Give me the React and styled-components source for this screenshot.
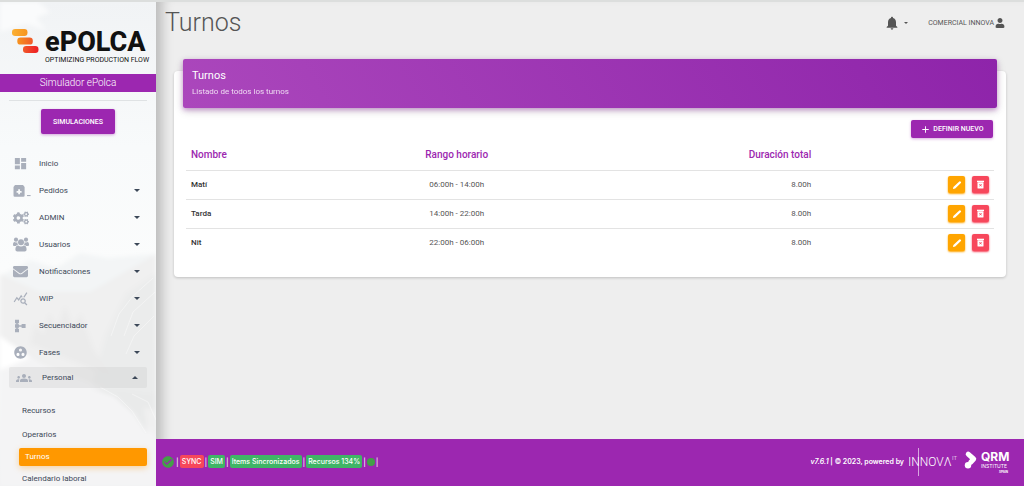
import { useState } from "react";
import styled, { createGlobalStyle } from "styled-components";
import {
  MdAdd,
  MdCheckCircle,
  MdDashboard,
  MdGroups,
  MdGroupWork,
  MdNotifications,
  MdQueryStats,
} from "react-icons/md";
import { FaCogs, FaEnvelope, FaUser } from "react-icons/fa";

const menu = [
  { name: "Inicio", icon: <MdDashboard size={15} />, plain: true },
  { name: "Pedidos", icon: <OrdersIcon /> },
  { name: "ADMIN", icon: <FaCogs size={16} /> },
  { name: "Usuarios", icon: <UsersIcon /> },
  { name: "Notificaciones", icon: <FaEnvelope size={15} /> },
  { name: "WIP", icon: <MdQueryStats size={15} /> },
  { name: "Secuenciador", icon: <SequenceIcon /> },
  { name: "Fases", icon: <MdGroupWork size={15} /> },
];

const submenu = ["Recursos", "Operarios", "Turnos", "Calendario laboral"];

const shifts = [
  { name: "Matí", range: "06:00h - 14:00h", total: "8.00h" },
  { name: "Tarda", range: "14:00h - 22:00h", total: "8.00h" },
  { name: "Nit", range: "22:00h - 06:00h", total: "8.00h" },
];

export default function App() {
  return (
    <>
      <GlobalStyle />
      <Page>
        <Sidebar />
        <Main>
          <TopBar>
            <PageTitle>Turnos</PageTitle>
            <UserArea>
              <BellButton aria-label="Notificaciones">
                <MdNotifications size={16} />
                <SmallCaret />
              </BellButton>
              <UserLink href="#perfil">
                COMERCIAL INNOVA
                <FaUser size={10} />
              </UserLink>
            </UserArea>
          </TopBar>
          <Content>
            <Card>
              <CardHeader>
                <CardTitle>Turnos</CardTitle>
                <CardText>Listado de todos los turnos</CardText>
              </CardHeader>
              <Actions>
                <NewButton>
                  <MdAdd size={11} />
                  DEFINIR NUEVO
                </NewButton>
              </Actions>
              <ShiftTable />
            </Card>
          </Content>
          <PageFooter />
        </Main>
      </Page>
    </>
  );
}

function Sidebar() {
  const [open, setOpen] = useState(true);

  return (
    <Aside>
      <Mountains />
      <Brand href="#inicio">
        <BrandMark />
        <BrandText>
          <BrandName>ePOLCA</BrandName>
          <BrandLine>OPTIMIZING PRODUCTION FLOW</BrandLine>
        </BrandText>
      </Brand>
      <Company>Simulador ePolca</Company>
      <Divider />
      <SimButton>SIMULACIONES</SimButton>
      <nav>
        {menu.map((item) => (
          <MenuLink key={item.name} href="#menu">
            <IconBox>{item.icon}</IconBox>
            <span>{item.name}</span>
            {!item.plain && <Caret />}
          </MenuLink>
        ))}
        <OpenGroup onClick={() => setOpen(!open)} aria-expanded={open}>
          <MdGroups size={16} />
          <span>Personal</span>
          <Caret $up={open} />
        </OpenGroup>
        {open && (
          <SubMenu>
            {submenu.map((name) => (
              <SubLink key={name} href="#personal" $active={name === "Turnos"}>
                {name}
              </SubLink>
            ))}
          </SubMenu>
        )}
      </nav>
    </Aside>
  );
}

function ShiftTable() {
  return (
    <Table>
      <thead>
        <tr>
          <Th $width="20%">Nombre</Th>
          <Th $width="27%" $align="center">Rango horario</Th>
          <Th $width="31%" $align="right">Duración total</Th>
          <Th aria-label="Acciones" />
        </tr>
      </thead>
      <tbody>
        {shifts.map((shift) => (
          <tr key={shift.name}>
            <Td $strong>{shift.name}</Td>
            <Td $align="center">{shift.range}</Td>
            <Td $align="right">{shift.total}</Td>
            <Td>
              <RowActions>
                <IconButton $color="#ffa500" aria-label={`Editar ${shift.name}`}>
                  <PencilIcon />
                </IconButton>
                <IconButton $color="#f7475b" aria-label={`Borrar ${shift.name}`}>
                  <TrashIcon />
                </IconButton>
              </RowActions>
            </Td>
          </tr>
        ))}
      </tbody>
    </Table>
  );
}

function PageFooter() {
  return (
    <Footer>
      <Status>
        <MdCheckCircle size={14} color="#43a047" />
        <span>|</span>
        <Badge $color="#f7475b">SYNC</Badge>
        <span>|</span>
        <Badge>SIM</Badge>
        <span>|</span>
        <Badge>Items Sincronizados</Badge>
        <span>|</span>
        <Badge>Recursos 134%</Badge>
        <span>|</span>
        <Dot />
        <span>|</span>
      </Status>
      <Credits>
        <span>
          <i>v7.6.1</i> | © 2023, powered by
        </span>
        <InnovaLogo />
        <QrmLogo />
      </Credits>
    </Footer>
  );
}

function BrandMark() {
  return (
    <svg width="27" height="26" viewBox="0 0 27 26">
      <defs>
        <linearGradient id="m1">
          <stop offset="0" stopColor="#fbb034" />
          <stop offset="1" stopColor="#f7941e" />
        </linearGradient>
        <linearGradient id="m2">
          <stop offset="0" stopColor="#f7941e" />
          <stop offset="1" stopColor="#f1592a" />
        </linearGradient>
        <linearGradient id="m3">
          <stop offset="0" stopColor="#f1592a" />
          <stop offset="1" stopColor="#ee1c25" />
        </linearGradient>
      </defs>
      <rect x="0" y="1" width="15.5" height="7" rx="3.2" fill="url(#m1)" />
      <rect x="5.3" y="9.6" width="15.5" height="7" rx="3.2" fill="url(#m2)" />
      <rect x="11" y="18" width="15.5" height="7" rx="3.2" fill="url(#m3)" />
    </svg>
  );
}

function OrdersIcon() {
  return (
    <svg width="18" height="14" viewBox="0 0 18 14" fill="currentColor">
      <path
        fillRule="evenodd"
        d="M2 1h8l1.6 2v8.4a1.3 1.3 0 0 1-1.3 1.3H1.8a1.3 1.3 0 0 1-1.3-1.3V3zM5.2 5.3v1.6H3.6v1.8h1.6v1.6h1.8V8.7h1.6V6.9H7V5.3z"
      />
      <path d="M14 11h3.6v1.1H14z" />
    </svg>
  );
}

function UsersIcon() {
  return (
    <svg width="16" height="15" viewBox="0 0 16 15" fill="currentColor">
      <circle cx="3" cy="2.7" r="2.1" />
      <circle cx="13" cy="2.7" r="2.1" />
      <path d="M0 7.6C0 6 .6 5.1 1.5 5.1c.8.6 2 .6 3 .1-.2 1.1.1 2 .6 2.8-1 .1-1.8.5-2.4 1.1H1.3C.5 9.1 0 8.6 0 7.6zM16 7.6c0-1.6-.6-2.5-1.5-2.5-.8.6-2 .6-3 .1.2 1.1-.1 2-.6 2.8 1 .1 1.8.5 2.4 1.1h1.4c.8 0 1.300-.5 1.300-1.500z" />
      <circle cx="8" cy="5.3" r="3" />
      <path d="M2.4 12.4c0-2.5 1-4 2.8-4 1.700 1.300 3.900 1.300 5.600 0 1.800 0 2.800 1.500 2.800 4 0 1.300-.8 2-2 2H4.400c-1.200 0-2-.7-2-2z" />
    </svg>
  );
}

function SequenceIcon() {
  return (
    <svg width="14" height="14" viewBox="0 0 14 14" fill="currentColor">
      <path d="M2 .8h4v3.4H2zM2 5.3h4v3.4H2zM2 9.8h4v3.4H2zM3.2 4h1.600v6H3.200zM6 6.300h3v1.400H6zM8.600 5.100h4v3.800h-4z" />
    </svg>
  );
}

function PencilIcon() {
  return (
    <svg width="10" height="10" viewBox="0 0 10 10" fill="#fff">
      <path d="M.9 9.100l.5-2.200 5.900-5.500a.9.9 0 0 1 1.200 0l.4.500a.9.9 0 0 1 0 1.200L3.200 8.600z" />
    </svg>
  );
}

function TrashIcon() {
  return (
    <svg width="9" height="9" viewBox="0 0 9 9" fill="#fff">
      <path d="M1 .7h7v1.300H1z" />
      <path
        fillRule="evenodd"
        d="M1.500 2.300h6v5.600a.7.7 0 0 1-.7.700H2.200a.7.7 0 0 1-.7-.7zM3.500 4l-.4.400.9.900-.9.900.4.400 1-.8 1 .8.400-.4-.9-.9.900-.9-.4-.4-1 .8z"
      />
    </svg>
  );
}

function InnovaLogo() {
  return (
    <svg width="50" height="30" viewBox="0 0 50 30" fill="#fff" fontFamily="Roboto, sans-serif">
      <path d="M9.500 1v28" stroke="#fff" strokeWidth=".6" />
      <text x="-1" y="19" fontSize="12" fontWeight="300">INNOVΛ</text>
      <text x="43" y="13" fontSize="6" fontWeight="300">IT</text>
    </svg>
  );
}

function QrmLogo() {
  return (
    <svg width="50" height="26" viewBox="0 0 50 26" fill="#fff" fontFamily="Inter, sans-serif">
      <path d="M4.200 5.200l5.500 4.800-3 3.200" fill="none" stroke="#fff" strokeWidth="5" strokeLinecap="round" strokeLinejoin="round" />
      <circle cx="4" cy="16.300" r="3.200" />
      <text x="17" y="12" fontSize="12" fontWeight="700">QRM</text>
      <text x="17" y="19" fontSize="5" fontWeight="400">INSTITUTE</text>
      <text x="35" y="24" fontSize="3" fontWeight="700">SPAIN</text>
    </svg>
  );
}

function Mountains() {
  return (
    <Backdrop viewBox="0 0 156 484" preserveAspectRatio="none" aria-hidden="true">
      <defs>
        <linearGradient id="sky" x2="0" y2="1">
          <stop offset="0" stopColor="#f1f3f5" />
          <stop offset=".3" stopColor="#f8fafb" />
          <stop offset=".55" stopColor="#fbfcfc" />
          <stop offset="1" stopColor="#f1f2f3" />
        </linearGradient>
        <filter id="soft">
          <feGaussianBlur stdDeviation="2" />
        </filter>
      </defs>
      <path d="M0 0h156v484H0z" fill="url(#sky)" />
      <g filter="url(#soft)">
        <path d="M0 0h38l12 10-14 6 10 12-20-6-26 8z" fill="#fafbfc" />
        <path d="M0 274l30-16 26 8 24-15 28 5 48-4v80H0z" fill="#f3f5f6" />
        <path d="M0 272l40 18 50 0 66-38v190L60 380 0 345z" fill="#f0f0f0" />
        <path d="M156 272l-30 20-20 40-14 50 34 18 30 6z" fill="#ebecec" />
        <path d="M30 342l5-20 8 10 6-20 8 14 8-22 8 20 8-12 12 34 20 30z" fill="#ebebeb" />
        <path d="M0 334l42 28 56 22 34 12 24 40v48H0z" fill="#f4f4f5" />
        <path d="M0 334l30 22-30 12z" fill="#fff" />
        <path d="M90 386l24 8 20 18 14 20-4-26 12 2v-16l-30-4z" fill="#e9eaea" />
      </g>
      <g fill="none" stroke="#fff" strokeWidth="1" opacity=".4">
        <path d="M153 276l-20 18-14 18-8 22M155 290l-22 20-9 24M154 314l-20 20-8 18" />
        <path d="M100 385l18 10 14 14 14 22M132 392l16 8 8 18" />
      </g>
    </Backdrop>
  );
}

const GlobalStyle = createGlobalStyle`
  * {
    box-sizing: border-box;
  }
  body {
    margin: 0;
    background: #eee;
    color: #3c4858;
    font-family: Roboto, "Liberation Sans", sans-serif;
    font-size: 8px;
  }
  button {
    font-family: inherit;
    border: 0;
    padding: 0;
    cursor: pointer;
  }
  a {
    color: inherit;
    text-decoration: none;
  }
`;

const Page = styled.div`
  display: flex;
  height: 100vh;
  border-top: 2px solid #dcdedd;
`;

const Aside = styled.aside`
  position: relative;
  z-index: 1;
  flex: 0 0 156px;
  overflow: hidden;
`;

const Backdrop = styled.svg`
  position: absolute;
  inset: 0;
  z-index: -1;
  width: 100%;
  height: 100%;
`;

const Brand = styled.a`
  display: flex;
  gap: 6px;
  padding: 26px 0 0 12px;
  height: 72px;
`;

const BrandText = styled.div`
  color: #111;
`;

const BrandName = styled.div`
  font-size: 27px;
  font-weight: 800;
  line-height: 28px;
`;

const BrandLine = styled.div`
  font-size: 7px;
  line-height: 8px;
  white-space: nowrap;
`;

const Company = styled.div`
  background: #9c27b0;
  color: #fff;
  font-size: 10px;
  font-weight: 300;
  line-height: 18px;
  text-align: center;
`;

const Divider = styled.hr`
  margin: 8px 9px;
  border: 0;
  border-top: 1px solid #dfe2e4;
`;

const SimButton = styled.button`
  display: block;
  width: 74px;
  height: 25px;
  margin: 0 auto 16px;
  border-radius: 2px;
  background: #9c27b0;
  color: #fff;
  font-size: 7px;
  font-weight: 500;
  box-shadow: 0 1px 3px rgba(156, 39, 176, 0.4);
`;

const MenuLink = styled.a`
  display: flex;
  align-items: center;
  height: 27px;
  padding: 0 16px 0 13px;
`;

const IconBox = styled.span`
  display: flex;
  width: 26px;
  color: #a9afbb;

  svg {
    flex: none;
  }
`;

const Caret = styled.i`
  margin-left: auto;
  border: 2px solid transparent;
  border-width: ${(props) => (props.$up ? "0 3px 3px" : "3px 3px 0")};
  border-top-color: ${(props) => (props.$up ? "transparent" : "#3c4858")};
  border-bottom-color: ${(props) => (props.$up ? "#3c4858" : "transparent")};
`;

const OpenGroup = styled.button`
  display: flex;
  align-items: center;
  gap: 10px;
  width: calc(100% - 18px);
  height: 21px;
  margin: 1px 9px 11px;
  padding: 0 9px 0 7px;
  border-radius: 2px;
  background: rgba(200, 200, 200, 0.3);
  color: #3c4858;
  font-size: 8px;

  svg {
    color: #a9afbb;
  }
`;

const SubMenu = styled.div`
  display: flex;
  flex-direction: column;
`;

const SubLink = styled.a`
  margin: ${(props) => (props.$active ? "1px 9px 1px 19px" : "0 9px 0 19px")};
  padding-left: ${(props) => (props.$active ? "6px" : "3px")};
  border-radius: 2px;
  background: ${(props) => (props.$active ? "#ff9800" : "none")};
  box-shadow: ${(props) => (props.$active ? "0 2px 6px rgba(255, 152, 0, 0.35)" : "none")};
  color: ${(props) => (props.$active ? "#fff" : "inherit")};
  font-size: 8px;
  line-height: ${(props) => (props.$active ? "18px" : "24px")};
`;

const Main = styled.main`
  display: flex;
  flex: 1;
  flex-direction: column;
  min-width: 0;
  box-shadow: inset 14px 0 12px -8px rgba(0, 0, 0, 0.22);
`;

const TopBar = styled.header`
  display: flex;
  align-items: center;
  justify-content: space-between;
  height: 42px;
  padding: 0 19px 0 9px;
  color: #555;
`;

const PageTitle = styled.h1`
  margin: 0;
  font-size: 25px;
  font-weight: 300;
  line-height: 40px;
`;

const UserArea = styled.div`
  display: flex;
  align-items: center;
  gap: 20px;
`;

const BellButton = styled.button`
  display: flex;
  align-items: center;
  gap: 4px;
  background: none;
  color: #555;
`;

const SmallCaret = styled.i`
  border: 2px solid transparent;
  border-width: 2px 2px 0;
  border-top-color: #555;
`;

const UserLink = styled.a`
  display: flex;
  align-items: center;
  gap: 1px;
  font-size: 7px;
`;

const Content = styled.section`
  flex: 1;
  padding: 27px 18px 0;
`;

const Card = styled.div`
  padding: 0 9px 20px;
  border-radius: 4px;
  background: #fff;
  box-shadow: 0 1px 3px rgba(0, 0, 0, 0.2);
`;

const CardHeader = styled.div`
  height: 49px;
  margin-bottom: 12px;
  padding: 10px 9px;
  border-radius: 2px;
  background: linear-gradient(60deg, #ab47bc, #8e24aa);
  color: #fff;
  box-shadow: 0 3px 10px rgba(0, 0, 0, 0.15), 0 2px 5px rgba(156, 39, 176, 0.4);

  ${Card} > & {
    position: relative;
    top: -12px;
    margin-bottom: 0;
  }
`;

const CardTitle = styled.h2`
  margin: 0 0 3px;
  font-size: 11px;
  font-weight: 400;
  line-height: 14px;
`;

const CardText = styled.p`
  margin: 0;
  font-size: 8px;
  line-height: 12px;
  opacity: 0.8;
`;

const Actions = styled.div`
  display: flex;
  justify-content: flex-end;
  padding: 0 4px;
`;

const NewButton = styled.button`
  display: flex;
  align-items: center;
  justify-content: center;
  gap: 2px;
  width: 82px;
  height: 18px;
  border-radius: 2px;
  background: #9c27b0;
  color: #fff;
  font-size: 7px;
  font-weight: 500;
  box-shadow: 0 1px 3px rgba(156, 39, 176, 0.4);
`;

const Table = styled.table`
  width: calc(100% - 6px);
  margin: 0 3px;
  border-collapse: collapse;
`;

const Th = styled.th`
  width: ${(props) => props.$width || "auto"};
  height: 32px;
  padding: 2px 5px 0;
  border-bottom: 1px solid #e3e3e3;
  color: #9c27b0;
  font-size: 10px;
  font-weight: 500;
  text-align: ${(props) => props.$align || "left"};
`;

const Td = styled.td`
  height: 29px;
  padding: 0 5px;
  color: ${(props) => (props.$strong ? "#333" : "#555")};
  font-size: 8px;
  font-weight: ${(props) => (props.$strong ? 500 : 400)};
  text-align: ${(props) => props.$align || "left"};

  tr:not(:last-child) > & {
    border-bottom: 1px solid #e3e3e3;
  }
`;

const RowActions = styled.div`
  display: flex;
  justify-content: flex-end;
  gap: 7px;
`;

const IconButton = styled.button`
  display: flex;
  align-items: center;
  justify-content: center;
  width: 17px;
  height: 17px;
  border-radius: 2px;
  background: ${(props) => props.$color};
  color: #fff;
  box-shadow: 0 1px 2px ${(props) => props.$color};
`;

const Footer = styled.footer`
  display: flex;
  align-items: center;
  justify-content: space-between;
  height: 47px;
  padding: 0 10px 2px 5px;
  background: #9c27b0;
  color: #fff;
  font-family: Inter, "Liberation Sans", sans-serif;
  font-size: 8px;
`;

const Status = styled.div`
  display: flex;
  align-items: center;
  gap: 1px;
`;

const Badge = styled.span`
  padding: 0 2px;
  border-radius: 2px;
  background: ${(props) => props.$color || "#3fb566"};
  font-size: 7px;
  font-weight: 500;
  line-height: 13px;
`;

const Dot = styled.i`
  width: 8px;
  height: 8px;
  border-radius: 50%;
  background: #43a047;
`;

const Credits = styled.div`
  display: flex;
  align-items: center;
  gap: 5px;
  font-size: 7px;
  font-weight: 600;
`;
